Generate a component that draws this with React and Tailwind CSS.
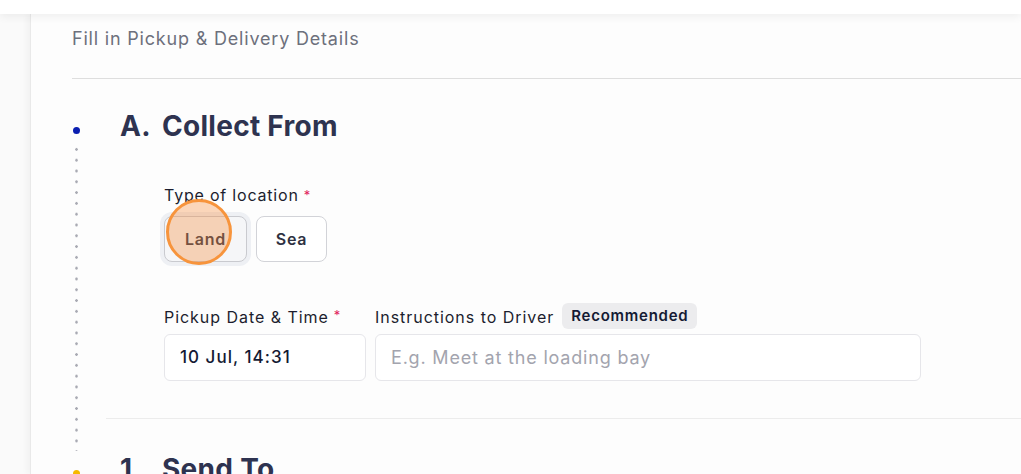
const font = { fontFamily: 'Inter, "Noto Sans", sans-serif' };

const Req = () => <span className="ml-[5px] text-[13px] align-top text-[#e0245e]">*</span>;

const TimelineRail = ({ dot, dotted }) => (
  <div className="flex w-[8px] shrink-0 flex-col items-center">
    <div className={`mt-[19px] h-[7px] w-[7px] rounded-full ${dot}`} />
    {dotted && (
      <div className="mt-[10px] w-[3px] flex-1 bg-[radial-gradient(circle,#a9aab3_1.2px,transparent_1.5px)] bg-[length:3px_10.8px]" />
    )}
  </div>
);

const SectionTitle = ({ letter, title }) => (
  <h2 className="flex pl-[14px] text-[28px] font-bold leading-[36px] tracking-[0.01em] text-[#2e3350]">
    <span className="w-[42px]">{letter}</span>
    <span>{title}</span>
  </h2>
);

export default function App() {
  return (
    <div className="h-[474px] w-[1021px] overflow-hidden bg-[#f9f9f9]" style={font}>
      <div className="relative z-10 h-[14px] bg-white shadow-[0_3px_8px_rgba(0,0,0,0.06)]" />
      <div className="flex h-[460px]">
        <div className="w-[30px] shrink-0 bg-[#fafafa]" />
        <main className="flex-1 border-l border-[#e9e9e9] bg-[#fdfdfd] pl-[41px] shadow-[-3px_0_6px_rgba(0,0,0,0.04)]">
          <p className="mt-[13px] text-[18px] leading-[24px] tracking-[0.045em] text-[#6d707c]">
            Fill in Pickup &amp; Delivery Details
          </p>
          <div className="mt-[27px] border-t border-[#dedede]" />

          <section className="mt-[29px] flex">
            <TimelineRail dot="bg-[#0a1eb0]" dotted />
            <div className="ml-[26px] flex-1">
              <SectionTitle letter="A." title="Collect From" />

              <div className="pl-[58px]">
                <div className="mt-[39px] text-[16px] leading-[24px] tracking-[0.05em] text-[#1c1d2e]">
                  Type of location
                  <Req />
                </div>
                <div className="mt-[9px] flex gap-[9px]">
                  <div className="relative">
                    <button className="h-[46px] w-[83px] rounded-[8px] border border-[#c9cacf] bg-[#f5f6f8] text-[16px] font-semibold tracking-[0.05em] text-[#2e3142] ring-4 ring-[#eef0f4]">
                      Land
                    </button>
                    <div className="pointer-events-none absolute left-[2px] top-[-17px] h-[66px] w-[66px] rounded-full border-[3px] border-[#f7943c] bg-[rgba(246,140,60,0.35)]" />
                  </div>
                  <button className="h-[46px] w-[71px] rounded-[8px] border border-[#d2d3d8] bg-white text-[16px] font-semibold tracking-[0.05em] text-[#2e3142]">
                    Sea
                  </button>
                </div>

                <div className="mt-[39px] flex gap-[9px]">
                  <div className="w-[202px]">
                    <div className="flex h-[30px] items-center text-[16px] tracking-[0.06em] text-[#1c1d2e]">
                      <span className="mt-[2px]">Pickup Date &amp; Time</span>
                      <Req />
                    </div>
                    <div className="mt-[3px] flex h-[47px] items-center rounded-[6px] border border-[#e6e6ea] bg-white px-[15px] text-[17px] font-medium tracking-[0.06em] text-[#141a33]">
                      10 Jul, 14:31
                    </div>
                  </div>
                  <div className="w-[546px]">
                    <div className="flex h-[30px] items-center text-[16px] tracking-[0.06em] text-[#1c1d2e]">
                      <span className="mt-[2px]">Instructions to Driver</span>
                      <span className="ml-[8px] flex h-[26px] items-center rounded-[6px] bg-[#ececee] px-[9px] text-[15px] font-semibold tracking-[0.05em] text-[#141a33]">
                        Recommended
                      </span>
                    </div>
                    <div className="mt-[3px] flex h-[47px] items-center rounded-[6px] border border-[#e6e6ea] bg-white px-[15px] text-[18px] tracking-[0.045em] text-[#a3a4ae]">
                      E.g. Meet at the loading bay
                    </div>
                  </div>
                </div>
              </div>

              <div className="mt-[37px] border-t border-[#ececec]" />
              <div className="h-[32px]" />
            </div>
          </section>

          <section className="flex">
            <TimelineRail dot="bg-[#f6b900]" />
            <div className="ml-[26px] flex-1">
              <SectionTitle letter="1." title="Send To" />
            </div>
          </section>
        </main>
      </div>
    </div>
  );
}
